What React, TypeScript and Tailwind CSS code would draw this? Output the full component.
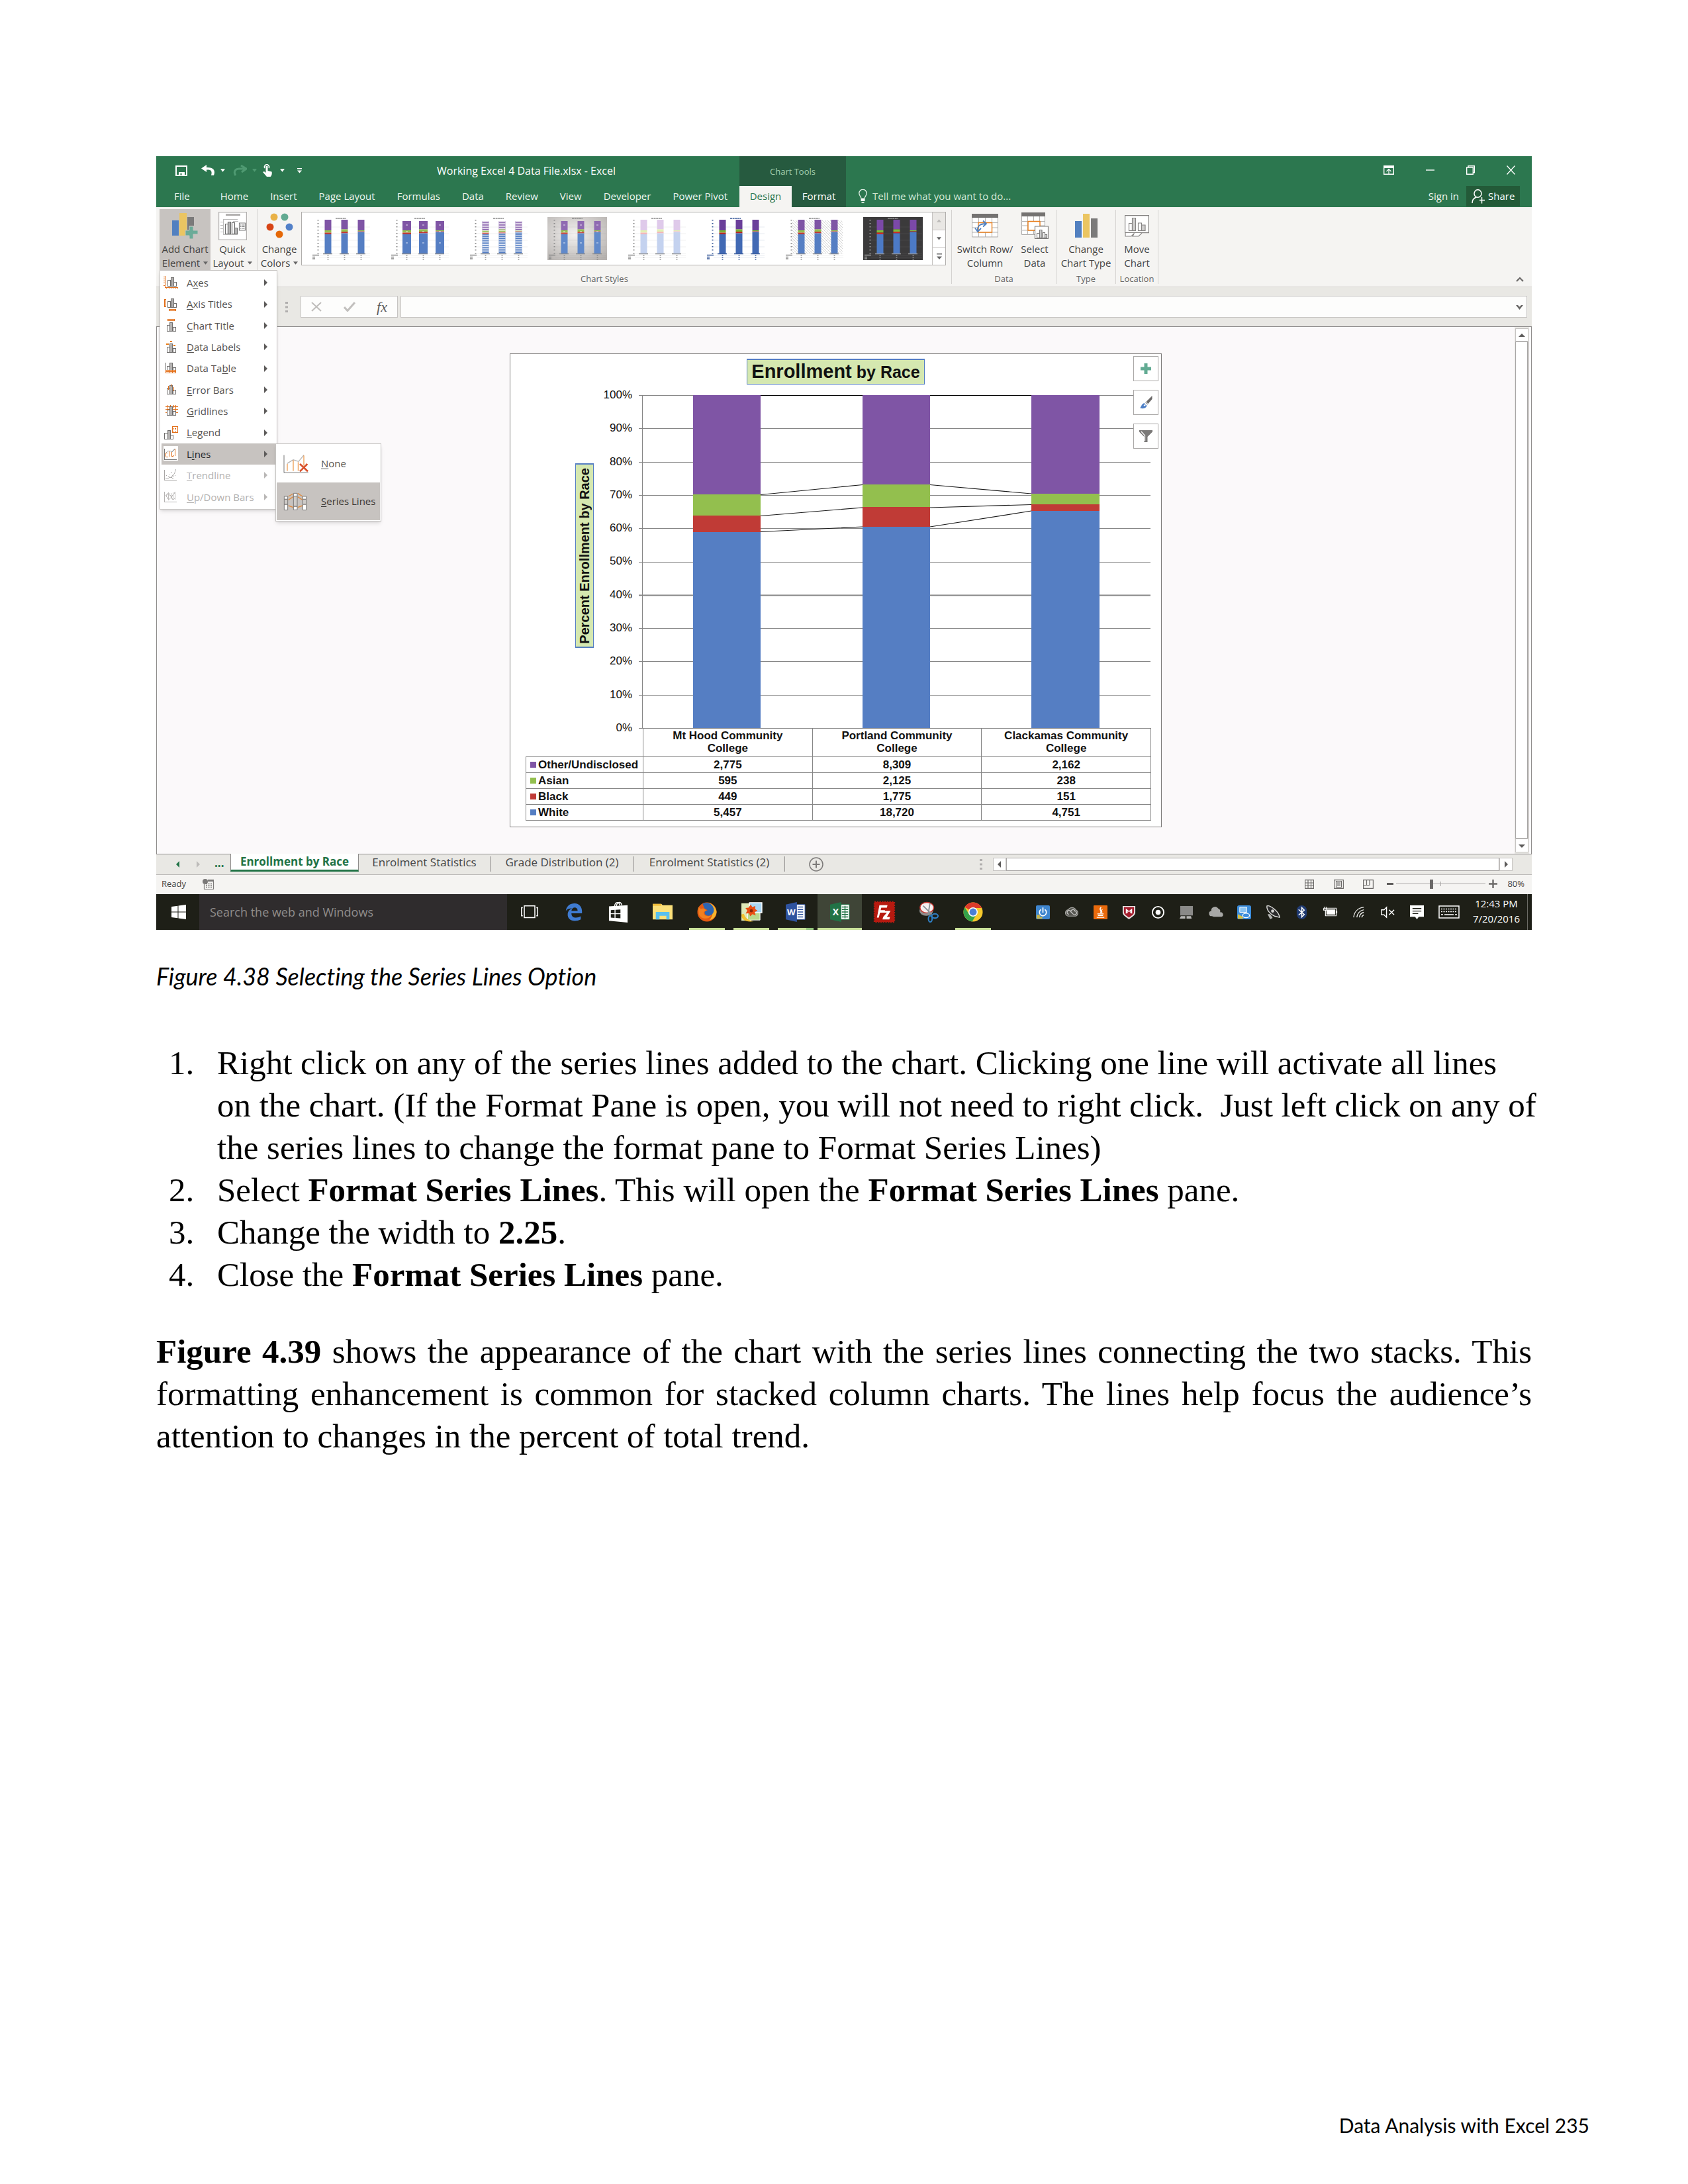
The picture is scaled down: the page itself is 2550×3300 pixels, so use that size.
import React from "react";

/* ---------- small shared drawings ---------- */

function Caret({ className = "" }: { className?: string }) {
  return (
    <svg viewBox="0 0 8 5" className={"inline-block h-[5px] w-[7px] " + className} aria-hidden="true">
      <path d="M0 0h8L4 5z" fill="currentColor" />
    </svg>
  );
}

function Grip() {
  return (
    <svg viewBox="0 0 4 16" className="h-[16px] w-[4px]" aria-hidden="true">
      <path d="M0 0h4v3H0zM0 6.500h4v3H0zM0 13h4v3H0z" fill="#b1afae" />
    </svg>
  );
}

function Arrow({ dir, color = "#5d5b5a" }: { dir: "up" | "down" | "left" | "right"; color?: string }) {
  const d = {
    up: "M0 8h10L5 3z",
    down: "M0 3h10L5 8z",
    left: "M7 0v10L2 5z",
    right: "M3 0v10l5-5z",
  }[dir];
  return (
    <svg viewBox="0 0 10 10" className="h-[10px] w-[10px]" aria-hidden="true">
      <path d={d} fill={color} />
    </svg>
  );
}

/* ---------- title bar and tabs ---------- */

function TitleBar() {
  return (
    <div className="flex h-[45px] items-stretch text-white">
      <div className="flex w-[424px] items-center pb-[2px] pl-[29px]">
        <button aria-label="Save">
          <svg viewBox="0 0 18 16" className="h-[16px] w-[18px]">
            <path d="M1 1h16v14H1z" fill="none" stroke="#fff" strokeWidth="2" />
            <path d="M5 10h9v6h-9z" fill="#fff" />
            <path d="M7.5 12h2v3h-2z" fill="#2c774f" />
          </svg>
        </button>
        <button aria-label="Undo" className="ml-[21px] flex items-center gap-[8px]">
          <svg viewBox="0 0 21 17" className="h-[17px] w-[21px]">
            <path d="M8 0L0 5.5 8 11V7.5c6-.5 9 1 7 8.500h4c3-8-1-12.500-11-12z" fill="#fff" />
          </svg>
          <Caret />
        </button>
        <button aria-label="Redo" className="ml-[12px] flex items-center gap-[8px] text-[#4f9a72]">
          <svg viewBox="0 0 21 17" className="h-[17px] w-[21px]">
            <path d="M12 1l8 5-7 5M19 6H9c-7 0-8 6-5 10" fill="none" stroke="#4f9a72" strokeWidth="3" />
          </svg>
          <Caret />
        </button>
        <button aria-label="Touch mode" className="ml-[8px] flex items-center gap-[11px]">
          <svg viewBox="0 0 16 19" className="h-[19px] w-[16px]">
            <path d="M4 6a3.500 3.500 0 1 1 6 0" fill="none" stroke="#fff" strokeWidth="1.600" />
            <path d="M5.500 3h3v7l6 1.500c1 4-1 7-2 7.500H7L1 12l2-1 2.500 2z" fill="#fff" />
          </svg>
          <Caret />
        </button>
        <button aria-label="Customize toolbar" className="ml-[19px]">
          <svg viewBox="0 0 7 8" className="h-[8px] w-[7px]">
            <path d="M0 0h7v1.500H0zM0 3.500h7L3.500 7.500z" fill="#fff" />
          </svg>
        </button>
      </div>
      <div className="flex w-[457px] items-center pb-[2px] whitespace-nowrap text-[16px]">
        Working Excel 4 Data File.xlsx - Excel
      </div>
      <div className="flex w-[161px] items-center justify-center bg-[#265a3f] text-[13px] text-[#a3d0b1]">
        <span className="pt-[3px]">Chart Tools</span>
      </div>
      <div className="ml-auto flex items-center gap-[48px] pr-[25px] pb-[3px]">
        <button aria-label="Ribbon display options">
          <svg viewBox="0 0 16 14" className="h-[14px] w-[16px]">
            <path d="M.700.700h14.600v12.600H.700z" fill="none" stroke="#fff" strokeWidth="1.400" />
            <path d="M1 1h14v3H1z" fill="#fff" />
            <path d="M8 13V6M4.500 9L8 5.500 11.500 9" fill="none" stroke="#fff" strokeWidth="1.200" />
          </svg>
        </button>
        <button aria-label="Minimize">
          <svg viewBox="0 0 13 14" className="h-[14px] w-[13px]">
            <path d="M0 7h13" stroke="#fff" strokeWidth="1.400" />
          </svg>
        </button>
        <button aria-label="Restore">
          <svg viewBox="0 0 13 14" className="h-[14px] w-[13px]">
            <path d="M.700 3h9.600v10.300H.700zM3 3V.700h9.300v10H10" fill="none" stroke="#fff" strokeWidth="1.400" />
          </svg>
        </button>
        <button aria-label="Close">
          <svg viewBox="0 0 13 14" className="h-[14px] w-[13px]">
            <path d="M.500.500l12 13M12.500.500l-12 13" stroke="#fff" strokeWidth="1.400" />
          </svg>
        </button>
      </div>
    </div>
  );
}

const TABS = ["Home", "Insert", "Page Layout", "Formulas", "Data", "Review", "View", "Developer", "Power Pivot"];

function TabRow() {
  return (
    <div className="flex h-[32px] items-stretch whitespace-nowrap text-[15px] text-[#eef6f0]">
      <div className="flex w-[881px] items-center pb-[2px] pl-[27px]">
        <button className="mr-[46px]">File</button>
        <div className="flex gap-[33px]">
          {TABS.map((t) => (
            <button key={t}>{t}</button>
          ))}
        </div>
      </div>
      <button className="w-[79px] bg-[#f5f4f2] pb-[2px] text-[#2c774f]">Design</button>
      <button className="w-[82px] bg-[#265a3f] pb-[2px] text-white">Format</button>
      <label className="ml-[19px] flex items-center gap-[8px] pb-[2px]">
        <svg viewBox="0 0 13 21" className="h-[21px] w-[13px]" aria-hidden="true">
          <path d="M4 14c0-3-3.200-4-3.200-8A5.700 5.700 0 0 1 12.200 6c0 4-3.200 5-3.200 8z" fill="none" stroke="#e4f1e8" strokeWidth="1.300" />
          <path d="M3.500 15h6v3h-6zM4.500 19h4v1.600h-4z" fill="#fff" />
        </svg>
        <input
          aria-label="Tell me what you want to do"
          placeholder="Tell me what you want to do..."
          className="w-[260px] bg-transparent outline-none placeholder:text-[#d5e9d6] placeholder:opacity-100"
        />
      </label>
      <div className="ml-auto flex items-stretch pr-[18px]">
        <button className="mr-[11px] pb-[2px]">Sign in</button>
        <button className="mb-px flex w-[81px] items-center gap-[5px] bg-[#235a38] pl-[8px] text-white">
          <svg viewBox="0 0 20 22" className="h-[22px] w-[20px]" aria-hidden="true">
            <ellipse cx="9.500" cy="6.500" rx="5.500" ry="5.800" fill="none" stroke="#fff" strokeWidth="1.500" />
            <path d="M1 21c0-5 3-8 6.500-9M12 16.500h8M15.500 12v9.500" fill="none" stroke="#fff" strokeWidth="1.500" />
          </svg>
          Share
        </button>
      </div>
    </div>
  );
}

/* ---------- ribbon ---------- */

function BigButton({
  icon,
  lines,
  caret = false,
  className,
}: {
  icon: React.ReactNode;
  lines: [string, string];
  caret?: boolean;
  className: string;
}) {
  return (
    <button className={"flex flex-col items-center whitespace-nowrap text-[15px] leading-[21px] text-[#444] " + className}>
      <span className="flex h-[50px] items-center justify-center">{icon}</span>
      <span>{lines[0]}</span>
      <span className="flex items-center gap-[5px]">
        {lines[1]}
        {caret && <Caret className="text-[#666]" />}
      </span>
    </button>
  );
}

function Group({ label, className = "", children }: { label: string; className?: string; children: React.ReactNode }) {
  return (
    <div className={"mt-[4px] flex h-[112px] flex-col border-r border-[#d4d2d0] " + className}>
      <div className="-mt-px flex h-[96px] items-start">{children}</div>
      <div className="text-center text-[13px] leading-[26px] text-[#666]">{label}</div>
    </div>
  );
}

type Thumb = {
  bg?: string;
  wide?: boolean;
  purple: string;
  green: string;
  red: string;
  blue: string;
  striped?: boolean;
  hatch?: boolean;
  ink?: string;
  marks?: boolean;
};

const THUMBS: Thumb[] = [
  { purple: "#7f55a5", green: "#93bf4e", red: "#c03b36", blue: "#557ec3" },
  { purple: "#7f55a5", green: "#93bf4e", red: "#c03b36", blue: "#557ec3", wide: true, marks: true },
  { purple: "#8a63ad", green: "#93bf4e", red: "#c03b36", blue: "#557ec3", striped: true },
  { bg: "url(#shade)", purple: "#8f6ab2", green: "#93bf4e", red: "#c8504b", blue: "#6089ca", marks: true },
  { purple: "#dfcaea", green: "#e2efb4", red: "#f3b6ba", blue: "#c4d2ef" },
  { purple: "#6a3f9a", green: "#78b032", red: "#b72a24", blue: "#4169b4", ink: "#385a99" },
  { purple: "#7f55a5", green: "#93bf4e", red: "#c03b36", blue: "#557ec3", hatch: true },
  { bg: "#3b3a3b", purple: "#7b49a8", green: "#7fbd3a", red: "#cc2c26", blue: "#4c7ac6", ink: "#9a9a9a" },
];

function ThumbChart({ t }: { t: Thumb }) {
  const w = t.wide ? 13 : 10;
  const top = t.wide || t.marks || t.striped ? 6 : 4;
  const ink = t.ink ?? "#8b8b8b";
  const bars = [
    { x: 25.5, g: 20, r: 23.5, b: 26 },
    { x: 50.5, g: 18.5, r: 22, b: 24.5 },
    { x: 75.5, g: 20, r: 21.5, b: 22.5 },
  ];
  return (
    <svg viewBox="0 0 90 65" className="h-[65px] w-[90px]" aria-hidden="true">
      <defs>
        <radialGradient id="shade" cx=".45" cy=".4" r=".75">
          <stop offset="0" stopColor="#f3f1f0" />
          <stop offset="1" stopColor="#b5b1ae" />
        </radialGradient>
        <pattern id="hatch" width="4" height="4" patternUnits="userSpaceOnUse">
          <path d="M0 0l4 4" stroke="#cfcfcf" strokeWidth=".9" />
        </pattern>
      </defs>
      <rect width="90" height="65" fill={t.bg ?? "#fff"} />
      {t.hatch && <rect x="12" y="5" width="76" height="50" fill="url(#hatch)" />}
      <path d="M12 55h77M12 58h77M12 61h77M12 45h77M12 35h77M12 25h77M12 15h77" stroke={ink} strokeWidth=".3" opacity=".4" />
      <path d="M37 2h16" stroke={ink} strokeWidth="1.400" strokeDasharray="3 .6" />
      <path d="M10.500 4v52" stroke={ink} strokeWidth="2" strokeDasharray="1.400 3.600" />
      <path d="M18 55.500h14M43 55.500h14M68 55.500h14" stroke={ink} strokeWidth="1.500" />
      <path d="M2 57.500h10M2 60.500h4M2 63h4" stroke={ink} strokeWidth="1.400" />
      <path d="M25.500 57v8M50.500 57v8M75.500 57v8" stroke={ink} strokeWidth="1.800" strokeDasharray="1.500 1.500" />
      {bars.map((b) => (
        <g key={b.x}>
          <rect x={b.x - w / 2} y={top} width={w} height={b.g - top} fill={t.purple} />
          <rect x={b.x - w / 2} y={b.g} width={w} height={b.r - b.g} fill={t.green} />
          <rect x={b.x - w / 2} y={b.r} width={w} height={b.b - b.r} fill={t.red} />
          <rect x={b.x - w / 2} y={b.b} width={w} height={55 - b.b} fill={t.blue} />
          {t.striped && (
            <path d={`M${b.x} 6v49`} stroke="#fff" strokeWidth={w} strokeDasharray="1.200 1.500" opacity=".85" />
          )}
          {t.marks && <path d={`M${b.x - 1.5} 12h3M${b.x - 1.5} 39h3M${b.x - 1.5} 22h3`} stroke="#fff" strokeWidth=".8" />}
        </g>
      ))}
    </svg>
  );
}

function Gallery() {
  return (
    <div className="mt-[4px] flex h-[81px] w-[974px] border border-[#b0aeac] bg-white">
      <div className="flex flex-1 items-center justify-between px-[14px]">
        {THUMBS.map((t, i) => (
          <button key={i} aria-label={"Chart style " + (i + 1)}>
            <ThumbChart t={t} />
          </button>
        ))}
      </div>
      <div className="flex w-[20px] flex-col border-l border-[#c6c4c2]">
        <button aria-label="Scroll styles up" className="flex flex-1 items-center justify-center bg-[#e9e7e4]">
          <Caret className="rotate-180 text-[#bdbbb9]" />
        </button>
        <button aria-label="Scroll styles down" className="flex flex-1 items-center justify-center border-y border-[#c6c4c2]">
          <Caret className="text-[#666]" />
        </button>
        <button aria-label="More styles" className="flex flex-1 items-center justify-center">
          <svg viewBox="0 0 8 9" className="h-[9px] w-[8px]">
            <path d="M0 0h8v1.500H0zM0 4.500h8L4 9z" fill="#666" />
          </svg>
        </button>
      </div>
    </div>
  );
}

const AddChartIcon = (
  <svg viewBox="0 0 39 40" className="h-[40px] w-[39px]" aria-hidden="true">
    <path d="M0 12h10v23H0z" fill="#5280c0" />
    <path d="M11 1h11v34H11z" fill="#ebc562" />
    <path d="M23 7h10v13h-7v7h-3z" fill="#7b7a7a" />
    <path d="M20 27h6v-6h6v6h7v6h-7v7h-6v-5h-6z" fill="#6bab98" stroke="#c7c3c0" strokeWidth="1" />
  </svg>
);

const QuickLayoutIcon = (
  <svg viewBox="0 0 43 43" className="h-[43px] w-[43px]" aria-hidden="true">
    <path d="M.600.600h41.800v41.800H.600z" fill="#fff" stroke="#b4b2b1" strokeWidth="1.200" />
    <path d="M11 3h22v3H11z" fill="#b4b2b1" />
    <path d="M7 11.500h22M7 34.500h22M3 15.500h5M3 20.500h5M3 25.500h5M3 30.500h5M7.500 11v24M22 14.500h8" stroke="#bbb" strokeWidth="1" />
    <path d="M10.500 18.500h4v15h-4zM20.500 16.500h4v17h-4z" fill="#fff" stroke="#6a6a6a" strokeWidth="1.200" />
    <path d="M14.500 15.500h4v18h-4zM24.500 24.500h4v9h-4z" fill="#b9b9b9" stroke="#6a6a6a" strokeWidth="1.200" />
    <path d="M31.500 17h9v11h-9z" fill="#fff" stroke="#7a7a7a" strokeWidth="1.200" />
    <path d="M33 20h1.500M33 22.500h1.500M33 25h1.500M35.500 20h4M35.500 22.500h4M35.500 25h4" stroke="#777" strokeWidth="1.100" />
  </svg>
);

const ColorsIcon = (
  <svg viewBox="0 0 41 38" className="h-[38px] w-[41px]" aria-hidden="true">
    <circle cx="12" cy="6" r="5.500" fill="#e9b146" />
    <circle cx="28" cy="6" r="5.500" fill="#62aa92" />
    <circle cx="6" cy="21" r="5.500" fill="#d74415" />
    <circle cx="35" cy="21" r="5.500" fill="#5280c8" />
    <circle cx="20" cy="32" r="5.500" fill="#e56806" />
  </svg>
);

const SwitchIcon = (
  <svg viewBox="0 0 40 36" className="h-[36px] w-[40px]" aria-hidden="true">
    <path d="M.500.500h39v34.500H.500z" fill="#fff" stroke="#a9a7a6" />
    <path d="M0 0h40v6H0z" fill="#747271" />
    <path d="M10.500 6v29M20.500 6v29M30.500 6v29M0 13.500h40M0 21h40M0 28h40" stroke="#b4b2b0" strokeWidth="1.100" />
    <path d="M10 13.500h20.500V28H10z" fill="#fff" stroke="#e97e1b" strokeWidth="1.400" />
    <path d="M9 26c-1-7 3-11 12-11M17 10.500l5 4.500-5 4.500M5 21.500L9 27l5-5" fill="none" stroke="#4f80c0" strokeWidth="1.800" />
  </svg>
);

const SelectDataIcon = (
  <svg viewBox="0 0 41 40" className="h-[40px] w-[41px]" aria-hidden="true">
    <path d="M.500.500h35v33H.500z" fill="#fff" stroke="#a9a7a6" />
    <path d="M0 0h36v6H0z" fill="#747271" />
    <path d="M9.500 6v28M18.500 6v28M27.500 6v28M0 13.500h36M0 20h36M0 27h36" stroke="#b4b2b0" strokeWidth="1.100" />
    <path d="M10 13.500h18V27H10z" fill="#fff" stroke="#e97e1b" strokeWidth="1.400" />
    <path d="M20.500 21h20v18.500h-20z" fill="#fff" stroke="#7a7877" strokeWidth="1.200" />
    <path d="M23.500 31.500h4v7h-4zM32.500 30.500h3v8h-3z" fill="#fff" stroke="#7a7877" strokeWidth="1.100" />
    <path d="M27.500 26.500h3.500v12h-3.500zM35.500 33.500h3v5h-3z" fill="#ccc" stroke="#7a7877" strokeWidth="1.100" />
  </svg>
);

const ChartTypeIcon = (
  <svg viewBox="0 0 34 36" className="h-[36px] w-[34px]" aria-hidden="true">
    <path d="M0 11h10v25H0z" fill="#5280c0" />
    <path d="M12 0h10v36H12z" fill="#ebc562" />
    <path d="M24 7h10v29H24z" fill="#7b7a7a" />
  </svg>
);

const MoveChartIcon = (
  <svg viewBox="0 0 37 33" className="h-[33px] w-[37px]" aria-hidden="true">
    <path d="M.600.600h35.800v26H.600z" fill="#fff" stroke="#868483" strokeWidth="1.200" />
    <path d="M6.500 12.500h5v11h-5zM20.500 12h5v11.500h-5z" fill="#fff" stroke="#868483" strokeWidth="1.200" />
    <path d="M11.500 4.500h5v19h-5zM25.500 15h5.500v8.500h-5.500z" fill="#d0cfce" stroke="#868483" strokeWidth="1.200" />
    <path d="M1 27v5h9l4.500-4.500L12 32h9l5-5" fill="#fff" stroke="#868483" strokeWidth="1.200" />
  </svg>
);

/* ---------- Add Chart Element menu ---------- */

function Columns({ x, y }: { x: number; y: number }) {
  return (
    <g stroke="#6f6d6c" strokeWidth="3">
      <path d={`M${x} ${y + 13}h13v26h-13z`} fill="#fff" />
      <path d={`M${x + 27} ${y + 21}h12v18h-12z`} fill="#fff" />
      <path d={`M${x + 14} ${y}h12v39h-12z`} fill="#b3b1b0" />
    </g>
  );
}

const O = { fill: "none", stroke: "#e2701b", strokeWidth: 3 };
const MENU_ICONS: Record<string, React.ReactNode> = {
  axes: (
    <>
      <Columns x={19} y={6} />
      <path d="M7 1v50h59M0 3h7M0 12h7M0 22h7M0 32h7M0 42h7M14 51v6M24 51v6M34 51v6M44 51v6M54 51v6M64 51v6" {...O} />
    </>
  ),
  axisTitles: (
    <>
      <Columns x={19} y={4} />
      <path d="M5 7h6v32H5zM24 52h30v6H24z" {...O} />
    </>
  ),
  chartTitle: (
    <>
      <path d="M18 2h32v6H18z" {...O} />
      <Columns x={15} y={15} />
    </>
  ),
  dataLabels: (
    <>
      <Columns x={15} y={17} />
      <path d="M13 15h11v6H13zM31 2h9v6h-9zM45 20h9v6h-9z" fill="#e97e1b" />
    </>
  ),
  dataTable: (
    <>
      <Columns x={15} y={5} />
      <path d="M9 4v34" stroke="#6f6d6c" strokeWidth="3" />
      <path d="M9 36h45v14H9zM9 43h45M24 36v14M39 36v14" {...O} fill="#fff" />
    </>
  ),
  errorBars: (
    <>
      <Columns x={15} y={10} />
      <path d="M22 12v18M35 2v16M47 18v18" {...O} />
    </>
  ),
  gridlines: (
    <>
      <path d="M8 11h58M8 22h58M8 36h58M17 2v44M31 2v12M45 2v12M56 2v44" {...O} />
      <Columns x={15} y={11} />
    </>
  ),
  legend: (
    <>
      <Columns x={5} y={18} />
      <path d="M39 2h24v26H39zM44 9h4M44 15h4M44 21h4M51 9h7M51 15h7M51 21h7" {...O} fill="#fff" />
    </>
  ),
  lines: (
    <>
      <path d="M0-6h66v66H0z" fill="#fff" />
      <path d="M5 5v49h55" fill="none" stroke="#777" strokeWidth="3" />
      <path d="M11 25l10-9 9 1 8 4 14-15" fill="none" stroke="#aaa" strokeWidth="3" />
      <path d="M11 42V26l6-2M25 42V18M38 42V22M53 38V6M11 42h10M38 42l10-4" {...O} />
    </>
  ),
  trendline: (
    <>
      <path d="M5 5v47h55" fill="none" stroke="#a8a6a5" strokeWidth="3" />
      <path d="M10 44c24 0 40-14 46-40" fill="none" stroke="#b5b3b2" strokeWidth="3" />
      <path d="M12 32h4M22 34h4M24 24h4M34 20h4M40 46h4M44 36h4M50 30h4M34 40h4" stroke="#a8a6a5" strokeWidth="3" />
    </>
  ),
  upDown: (
    <>
      <path d="M5 5v47h55" fill="none" stroke="#b5b3b2" strokeWidth="3" />
      <path d="M11 24l12-12 20 30 10-6V8L34 32 23 42zM23 12v30M53 8v34M34 12v28M43 10v32" fill="none" stroke="#c0bebd" strokeWidth="3" />
    </>
  ),
};

const MENU = [
  { icon: "axes", pre: "A", key: "x", post: "es" },
  { icon: "axisTitles", pre: "", key: "A", post: "xis Titles" },
  { icon: "chartTitle", pre: "", key: "C", post: "hart Title" },
  { icon: "dataLabels", pre: "", key: "D", post: "ata Labels" },
  { icon: "dataTable", pre: "Data Ta", key: "b", post: "le" },
  { icon: "errorBars", pre: "", key: "E", post: "rror Bars" },
  { icon: "gridlines", pre: "", key: "G", post: "ridlines" },
  { icon: "legend", pre: "", key: "L", post: "egend" },
  { icon: "lines", pre: "L", key: "i", post: "nes", active: true },
  { icon: "trendline", pre: "", key: "T", post: "rendline", disabled: true },
  { icon: "upDown", pre: "", key: "U", post: "p/Down Bars", disabled: true },
];

function ChartElementMenu() {
  return (
    <div className="absolute top-[92px] left-0 z-10">
      <ul className="grid h-[362px] w-[178px] auto-rows-fr border border-[#c6c4c2] bg-white p-[2px] text-[15px] text-[#55524f] shadow-md">
        {MENU.map((m) => (
          <li key={m.icon} className="flex">
            <button
              disabled={m.disabled}
              className={
                "flex flex-1 items-center pl-[3px] whitespace-nowrap " +
                (m.active ? "bg-[#c7c3c0] text-[#262626]" : m.disabled ? "text-[#b3b1b0]" : "")
              }
            >
              <svg
                viewBox="0 0 66 60"
                shapeRendering="crispEdges"
                className="mr-[13px] h-[20px] w-[22px] shrink-0 overflow-visible"
                aria-hidden="true"
              >
                {MENU_ICONS[m.icon]}
              </svg>
              <span>
                {m.pre}
                <u className="underline-offset-2">{m.key}</u>
                {m.post}
              </span>
              <span className="mr-[12px] ml-auto">
                <svg viewBox="0 0 5 10" className="h-[10px] w-[5px]" aria-hidden="true">
                  <path d="M0 0v10l5-5z" fill={m.disabled ? "#b9b7b6" : "#5d5b5a"} />
                </svg>
              </span>
            </button>
          </li>
        ))}
      </ul>
      <ul className="absolute top-[262px] left-[175px] flex h-[118px] w-[160px] flex-col border border-[#c6c4c2] bg-white p-px text-[15px] text-[#55524f] shadow-md">
        <li className="flex flex-1">
          <button className="flex flex-1 items-center gap-[19px] pl-[10px]">
            <svg viewBox="0 0 112 84" className="h-[28px] w-[38px]" aria-hidden="true">
              <path d="M2 2v80h110" fill="none" stroke="#777" strokeWidth="3" />
              <path d="M16 40l28-17 24 8L92 2" fill="none" stroke="#b5b3b2" strokeWidth="4" />
              <path d="M17 74V42M44 74V25M66 74V34M92 50V4" fill="none" stroke="#e97e1b" strokeWidth="3" />
              <path d="M74 42l36 34M108 42L74 76" stroke="#d9502a" strokeWidth="8" />
            </svg>
            <span>
              <u className="underline-offset-2">N</u>one
            </span>
          </button>
        </li>
        <li className="flex flex-1">
          <button className="flex flex-1 items-center gap-[19px] bg-[#c7c3c0] pl-[10px] whitespace-nowrap text-[#3a3836]">
            <svg viewBox="0 0 112 84" className="h-[28px] w-[38px] shrink-0" aria-hidden="true">
              <path d="M22 18L44 6M22 34l22-14M22 60l22 8M64 4l22 14M64 20l22 14M64 68l22-8" stroke="#e08a3c" strokeWidth="4" />
              <g stroke="#7a7877" strokeWidth="3">
                <path d="M3 18h16v13H3zM3 54h16v26H3zM45 4h17v13H45zM45 63h17v16H45zM87 18h16v13H87zM87 54h16v26H87z" fill="#fff" />
                <path d="M3 31h16v23H3zM45 17h17v46H45zM87 31h16v23H87z" fill="#cfccc9" />
              </g>
            </svg>
            <span>
              <u className="underline-offset-2">S</u>eries Lines
            </span>
          </button>
        </li>
      </ul>
    </div>
  );
}

function Ribbon() {
  return (
    <div className="relative flex h-[121px] border-b border-[#d4d2d0] bg-[#f5f4f2] pl-[5px]">
      <div className="relative mt-[3px] flex h-[96px] w-[148px] border-r border-[#d4d2d0]">
        <BigButton className="w-[77px] bg-[#c7c3c0]" icon={AddChartIcon} lines={["Add Chart", "Element"]} caret />
        <BigButton className="w-[66px]" icon={QuickLayoutIcon} lines={["Quick", "Layout"]} caret />
        <ChartElementMenu />
      </div>
      <Group label="Chart Styles" className="w-[1049px]">
        <BigButton className="w-[66px]" icon={ColorsIcon} lines={["Change", "Colors"]} caret />
        <Gallery />
      </Group>
      <Group label="Data" className="w-[158px]">
        <BigButton className="w-[100px]" icon={SwitchIcon} lines={["Switch Row/", "Column"]} />
        <BigButton className="w-[50px]" icon={SelectDataIcon} lines={["Select", "Data"]} />
      </Group>
      <Group label="Type" className="w-[90px]">
        <BigButton className="w-[89px]" icon={ChartTypeIcon} lines={["Change", "Chart Type"]} />
      </Group>
      <Group label="Location" className="w-[64px]">
        <BigButton className="w-[63px]" icon={MoveChartIcon} lines={["Move", "Chart"]} />
      </Group>
      <button aria-label="Collapse ribbon" className="mt-auto mr-[12px] mb-[7px] ml-auto">
        <svg viewBox="0 0 12 8" className="h-[8px] w-[12px]">
          <path d="M1 7l5-5 5 5" fill="none" stroke="#6b6968" strokeWidth="2.200" />
        </svg>
      </button>
    </div>
  );
}

function FormulaBar() {
  return (
    <div className="flex h-[60px] items-center border-b border-[#8f8d8c] bg-[#e9e8e4] pr-[7px] pl-[195px]">
      <Grip />
      <div className="ml-[19px] flex h-[33px] w-[147px] items-center justify-between border border-[#c6c4c2] bg-[#fdfdfc] px-[15px]">
        <button aria-label="Cancel">
          <svg viewBox="0 0 16 15" className="h-[15px] w-[16px]">
            <path d="M1 1l14 13M15 1L1 14" stroke="#bfbdbb" strokeWidth="2" />
          </svg>
        </button>
        <button aria-label="Enter">
          <svg viewBox="0 0 18 15" className="h-[15px] w-[18px]">
            <path d="M1 8l5 5.500L17 1" fill="none" stroke="#c2c0be" strokeWidth="3" />
          </svg>
        </button>
        <button aria-label="Insert function" className="font-['Liberation_Serif',serif] text-[22px] leading-none text-[#5f5d5c] italic">
          fx
        </button>
      </div>
      <div className="ml-[4px] flex h-[33px] flex-1 items-center border border-[#c6c4c2] bg-[#fdfdfc] pr-[5px]">
        <input aria-label="Formula" className="min-w-0 flex-1 bg-transparent outline-none" />
        <svg viewBox="0 0 11 8" className="h-[8px] w-[11px]" aria-hidden="true">
          <path d="M0 1h3l2.500 2.500L8 1h3L5.500 8z" fill="#6b6968" />
        </svg>
      </div>
    </div>
  );
}

/* ---------- chart ---------- */

const SERIES = [
  { name: "Other/Undisclosed", color: "bg-[#7f55a5]", values: ["2,775", "8,309", "2,162"] },
  { name: "Asian", color: "bg-[#93bf4e]", values: ["595", "2,125", "238"] },
  { name: "Black", color: "bg-[#c03b36]", values: ["449", "1,775", "151"] },
  { name: "White", color: "bg-[#557ec3]", values: ["5,457", "18,720", "4,751"] },
];
const COLLEGES = ["Mt Hood Community College", "Portland Community College", "Clackamas Community College"];
const STACKS = [
  { x: 82, w: 102, asian: 150, black: 182, white: 207 },
  { x: 338, w: 102, asian: 135, black: 169, white: 199 },
  { x: 593, w: 103, asian: 149, black: 165, white: 175 },
];
const PERCENTS = ["100%", "90%", "80%", "70%", "60%", "50%", "40%", "30%", "20%", "10%", "0%"];

function Plot() {
  return (
    <svg viewBox="0 0 773 504" className="mt-[9px] h-[504px] w-[773px]" role="img" aria-label="Stacked columns of percent enrollment by race">
      {PERCENTS.map((p, i) => (
        <path key={p} d={`M0 ${Math.round(i * 50.3) + 0.5}h773`} stroke="#868686" strokeWidth={i === 6 ? 2 : 1} />
      ))}
      <path d="M5.500 0v504" stroke="#868686" />
      <path d="M184 .5h154M440 .5h153" stroke="#000" />
      {STACKS.map((s) => (
        <g key={s.x}>
          <rect x={s.x} y="0" width={s.w} height={s.asian} fill="#7f55a5" />
          <rect x={s.x} y={s.asian} width={s.w} height={s.black - s.asian} fill="#93bf4e" />
          <rect x={s.x} y={s.black} width={s.w} height={s.white - s.black} fill="#c03b36" />
          <rect x={s.x} y={s.white} width={s.w} height={503 - s.white} fill="#557ec3" />
        </g>
      ))}
      <path
        d="M184 150.500L338 135.500M184 182.500L338 170M184 206.500L338 199M440 135.500L593 149M440 170L593 165.500M440 199L593 175"
        fill="none"
        stroke="#1a1a1a"
        strokeWidth="1.200"
      />
    </svg>
  );
}

function DataTable() {
  return (
    <table className="ml-[23px] w-[945px] table-fixed border-collapse text-center text-[17px] leading-[19px] font-bold">
      <colgroup>
        <col className="w-[177px]" />
        <col />
        <col />
        <col />
      </colgroup>
      <thead>
        <tr className="h-[43px]">
          <td />
          {COLLEGES.map((c) => (
            <th key={c} scope="col" className="border border-t-0 border-[#868686] px-[28px]">
              {c}
            </th>
          ))}
        </tr>
      </thead>
      <tbody>
        {SERIES.map((s) => (
          <tr key={s.name} className="h-[24px]">
            <th scope="row" className="border border-[#868686] text-left">
              <span className="flex items-center gap-[3px] pl-[6px]">
                <span className={"h-[9px] w-[9px] shrink-0 " + s.color} />
                {s.name}
              </span>
            </th>
            {s.values.map((v) => (
              <td key={v} className="border border-[#868686]">
                {v}
              </td>
            ))}
          </tr>
        ))}
      </tbody>
    </table>
  );
}

function ChartCard() {
  return (
    <figure className="relative h-[716px] w-[985px] border border-[#7f7d7c] bg-white font-['Liberation_Sans',sans-serif] text-[#111]">
      <div className="flex h-[53px] items-start justify-center pt-[7px]">
        <h2 className="flex h-[39px] items-baseline gap-[7px] border border-t-2 border-[#557ec3] bg-[#d5e8b0] px-[6px] text-[29px] leading-[34px] font-bold">
          Enrollment <span className="text-[25px]">by Race</span>
        </h2>
      </div>
      <div className="flex h-[512px] items-start">
        <div className="mt-[112px] ml-[98px] flex h-[279px] w-[28px] items-center justify-center border border-y-2 border-[#557ec3] bg-[#d5e8b0]">
          <span className="rotate-180 text-[20px] leading-[26px] font-bold whitespace-nowrap [writing-mode:vertical-rl]">
            Percent Enrollment by Race
          </span>
        </div>
        <ul className="flex h-[521px] w-[58px] flex-col justify-between text-right text-[17px] leading-[18px]">
          {PERCENTS.map((p) => (
            <li key={p}>{p}</li>
          ))}
        </ul>
        <div className="ml-[10px]">
          <Plot />
        </div>
      </div>
      <DataTable />
      <div className="absolute top-[3px] right-[4px] flex flex-col gap-[13px]">
        <button aria-label="Chart elements" className="flex h-[38px] w-[38px] items-center justify-center border border-[#a9a7a6] bg-white">
          <svg viewBox="0 0 16 16" className="h-[16px] w-[16px]">
            <path d="M5.500 0h5v5.500H16v5h-5.500V16h-5v-5.500H0v-5h5.500z" fill="#62ab93" />
          </svg>
        </button>
        <button aria-label="Chart styles" className="flex h-[38px] w-[38px] items-center justify-center border border-[#a9a7a6] bg-white">
          <svg viewBox="0 0 20 20" className="h-[20px] w-[20px]">
            <path d="M19.500 0v5l-6 7-3-3z" fill="#6b6968" />
            <path d="M9.500 10l3.500 3" stroke="#9a9a9a" strokeWidth="1.500" />
            <path d="M1 18.500c2-1 2-6 6.500-7.500l4 4c-1 4-6 5-10.500 3.500z" fill="#4f80c6" />
            <path d="M7 15l2.500-1.500" stroke="#fff" strokeWidth="1.500" />
          </svg>
        </button>
        <button aria-label="Chart filters" className="flex h-[38px] w-[38px] items-center justify-center border border-[#a9a7a6] bg-white">
          <svg viewBox="0 0 20 18" className="h-[18px] w-[20px]">
            <path d="M0 0h20v2.500L12.500 10v8h-5v-8L0 2.500z" fill="#7b7978" />
            <path d="M3 2l5.500 6v8" fill="none" stroke="#fff" strokeWidth="1.300" />
          </svg>
        </button>
      </div>
    </figure>
  );
}

function Worksheet() {
  return (
    <div className="flex h-[796px] border-x border-[#8f8d8c] bg-[#fbf9fa]">
      <div className="flex flex-1 justify-center pt-[40px]">
        <ChartCard />
      </div>
      <div className="mr-[3px] flex w-[22px] flex-col items-center bg-[#e9e8e4] py-[2px]">
        <button aria-label="Scroll up" className="flex h-[20px] w-[20px] items-center justify-center border border-[#c6c4c2] bg-white">
          <Arrow dir="up" />
        </button>
        <div className="w-[20px] flex-1 border border-r-2 border-[#a9a7a6] bg-white" />
        <button aria-label="Scroll down" className="flex h-[21px] w-[20px] items-center justify-center border border-[#c6c4c2] bg-white">
          <Arrow dir="down" />
        </button>
      </div>
    </div>
  );
}

/* ---------- sheet tabs and status bar ---------- */

function SheetTabs() {
  return (
    <div className="flex h-[32px] border-b border-[#bdbbb9] bg-[#e9e8e4] text-[17px] whitespace-nowrap text-[#444]">
      <div className="flex w-[112px] items-center border-t border-[#8f8d8c] pl-[28px]">
        <button aria-label="Previous sheet">
          <Arrow dir="left" color="#217346" />
        </button>
        <button aria-label="Next sheet" className="ml-[20px]">
          <Arrow dir="right" color="#bdbbb9" />
        </button>
        <button className="ml-[20px] pb-[4px] font-bold text-[#217346]">...</button>
      </div>
      <button className="mb-[4px] w-[194px] border-x border-b-3 border-x-[#8f8d8c] border-b-[#217346] bg-white leading-[24px] font-bold text-[#217346]">
        Enrollment by Race
      </button>
      <div className="flex flex-1 border-t border-[#8f8d8c]">
        <div className="mt-[3px] flex h-[23px]">
          <button className="w-[199px] border-r border-[#8f8d8c] pb-[5px] leading-[18px]">Enrolment Statistics</button>
          <button className="w-[217px] border-r border-[#8f8d8c] pb-[5px] leading-[18px]">Grade Distribution (2)</button>
          <button className="w-[228px] border-r border-[#8f8d8c] pb-[5px] leading-[18px]">Enrolment Statistics (2)</button>
        </div>
        <button aria-label="New sheet" className="ml-[36px]">
          <svg viewBox="0 0 22 22" className="h-[22px] w-[22px]">
            <circle cx="11" cy="11" r="10" fill="none" stroke="#7b7978" strokeWidth="1.500" />
            <path d="M11 5.500v11M5.500 11h11" stroke="#7b7978" strokeWidth="2" />
          </svg>
        </button>
        <div className="ml-auto flex items-center pr-[29px]">
          <Grip />
          <button aria-label="Scroll left" className="ml-[16px] flex h-[20px] w-[20px] items-center justify-center border border-[#c6c4c2] bg-white">
            <Arrow dir="left" />
          </button>
          <div className="h-[20px] w-[745px] border border-[#a9a7a6] bg-white" />
          <button aria-label="Scroll right" className="flex h-[20px] w-[20px] items-center justify-center border border-[#c6c4c2] bg-white">
            <Arrow dir="right" />
          </button>
        </div>
      </div>
    </div>
  );
}

function StatusBar() {
  return (
    <div className="flex h-[29px] items-center bg-[#f5f4f2] pr-[11px] pb-[2px] pl-[8px] text-[13px] text-[#444]">
      <span>Ready</span>
      <svg viewBox="0 0 18 16" className="ml-[25px] h-[16px] w-[18px]" aria-hidden="true">
        <circle cx="4" cy="4" r="4" fill="#7b7978" />
        <path d="M8 1h9v3H8z" fill="#7b7978" />
        <path d="M2.500 8v7.500h14V4" fill="none" stroke="#7b7978" strokeWidth="1.200" />
        <path d="M5 7.500h10M5 10h10M5 12.500h10" stroke="#7b7978" strokeWidth="1.300" strokeDasharray="2 1.500" />
      </svg>
      <div className="ml-auto flex items-center">
        <button aria-label="Normal view">
          <svg viewBox="0 0 14 14" className="h-[14px] w-[14px]">
            <path d="M.600.600h12.800v12.800H.600zM5 0v14M9.500 0v14M0 5h14M0 9.500h14" fill="none" stroke="#6b6968" strokeWidth="1.200" />
          </svg>
        </button>
        <button aria-label="Page layout view" className="ml-[30px]">
          <svg viewBox="0 0 15 14" className="h-[14px] w-[15px]">
            <path d="M.600.600h13.800v12.800H.600zM3.500 2.500h8v9h-8zM5 5h5M5 7h5M5 9h5" fill="none" stroke="#6b6968" strokeWidth="1.100" />
          </svg>
        </button>
        <button aria-label="Page break view" className="ml-[29px]">
          <svg viewBox="0 0 16 14" className="h-[14px] w-[16px]">
            <path d="M.600.600h14.800v12.800H.600zM5.500 0v8.500M10 0v8.500M1 8.500h9" fill="none" stroke="#6b6968" strokeWidth="1.200" />
          </svg>
        </button>
        <button aria-label="Zoom out" className="ml-[20px] h-[3px] w-[10px] bg-[#5d5b5a]" />
        <label className="relative ml-[4px] flex h-[14px] w-[135px] items-center">
          <span className="h-px w-full bg-[#a9a7a6]" />
          <span className="absolute left-[67px] h-[7px] w-px bg-[#a9a7a6]" />
          <input
            type="range"
            aria-label="Zoom"
            min={0}
            max={100}
            defaultValue={39}
            className="absolute inset-0 h-full w-full appearance-none bg-transparent [&::-webkit-slider-thumb]:h-[14px] [&::-webkit-slider-thumb]:w-[5px] [&::-webkit-slider-thumb]:appearance-none [&::-webkit-slider-thumb]:bg-[#6b6968]"
          />
        </label>
        <button aria-label="Zoom in" className="ml-[5px]">
          <svg viewBox="0 0 13 13" className="h-[13px] w-[13px]">
            <path d="M6.500 0v13M0 6.500h13" stroke="#6b6968" strokeWidth="2.400" />
          </svg>
        </button>
        <span className="ml-[15px]">80%</span>
      </div>
    </div>
  );
}

/* ---------- taskbar ---------- */

type TaskApp = { name: string; art: React.ReactNode; open?: boolean; active?: boolean; multi?: boolean };

const APPS: TaskApp[] = [
  {
    name: "Task view",
    art: (
      <path d="M7.500 6h17v19h-17zM5 9H3v13h2M27 9h2v13h-2" fill="none" stroke="#fff" strokeWidth="1.600" />
    ),
  },
  {
    name: "Edge",
    art: (
      <path
        d="M3 14C4 6 10 2 17 2c8 0 12 6 12 13v3H12c0 9 10 8 15 5v5C17 33 5 30 6 19c.500-5 3-7 7-9-4 0-8 1-10 4zm9 0h10c0-7-9-7-10 0z"
        fill="#3f7bd1"
      />
    ),
  },
  {
    name: "Store",
    art: (
      <>
        <path d="M10 7c1-8 7-8 9-1M13 7c1-9 8-8 9-1" fill="none" stroke="#fff" strokeWidth="1.500" />
        <path d="M1 7l30-2v28L1 30z" fill="#fff" />
        <path d="M4 13l6-.500V18H4zM11.500 12.500l8-.500v6h-8zM4 19.500h6v6l-6-.500zM11.500 19.500h8V26l-8-.500z" fill="#1e1f17" />
      </>
    ),
  },
  {
    name: "File Explorer",
    art: (
      <>
        <path d="M0 3h14l2 2h16v23H0z" fill="#fbe07a" />
        <path d="M0 3h14v3H0z" fill="#f0bd3a" />
        <path d="M5 16h22v12h-5v-6H11v6H5z" fill="#58c0ee" />
      </>
    ),
  },
  {
    name: "Firefox",
    open: true,
    art: (
      <>
        <circle cx="16" cy="16" r="15.500" fill="#e35a12" />
        <path d="M19 1c8 3 12 9 12.500 15-1 8-6 12-11.500 13 6-6 8-18-1-28z" fill="#f7b52b" />
        <path d="M9 3c8-5 16 0 18 8 1 7-4 11-8 11-6 0-8-4-6-7l4-2-5-3z" fill="#2d64b0" />
        <path d="M2 8l4 3 4-1 5 3-4 3c-1 7 7 8 12 5-3 7-16 8-20-1z" fill="#f2801f" />
      </>
    ),
  },
  {
    name: "Photo Gallery",
    open: true,
    art: (
      <>
        <path d="M0 2h16v28H0z" fill="#dfe9b8" />
        <path d="M10 14h20v15H10z" fill="#b9d98d" stroke="#fff" />
        <path d="M13 1h20v16H13z" fill="#a9d5f2" stroke="#fff" strokeWidth="1.500" />
        <path d="M15 4l2.500 4 5-1.500-.500 4.500 4 3-4.500 2 1.500 5.500-5-2-4 3.500-1.500-5-5.500.500 2.500-5-3-4 5-.500z" fill="#ea4d12" />
        <circle cx="16" cy="14" r="2.500" fill="#8a2408" />
        <path d="M0 20c0 9 8 13 20 11-8-1-14-5-16-12z" fill="#f1c131" />
      </>
    ),
  },
  {
    name: "Word",
    open: true,
    multi: true,
    art: (
      <>
        <path d="M16 4h15v24H16z" fill="#fff" stroke="#2f539f" />
        <path d="M19 8h9M19 12h9M19 16h9M19 20h9M19 24h9" stroke="#2f539f" strokeWidth="1.500" />
        <path d="M0 4l18-4v32L0 28z" fill="#2f539f" />
        <text x="9" y="21" textAnchor="middle" fontSize="14" fontWeight="700" fill="#fff">
          W
        </text>
      </>
    ),
  },
  {
    name: "Excel",
    open: true,
    active: true,
    art: (
      <>
        <path d="M16 4h15v24H16z" fill="#fff" stroke="#217346" />
        <path d="M19 8h10M19 12h10M19 16h10M19 20h10M19 24h10M24 6v20" stroke="#217346" strokeWidth="1.500" />
        <path d="M0 4l18-4v32L0 28z" fill="#217346" />
        <text x="9" y="21" textAnchor="middle" fontSize="15" fontWeight="700" fill="#fff">
          X
        </text>
      </>
    ),
  },
  {
    name: "FileZilla",
    art: (
      <>
        <rect x="0" y="0" width="32" height="32" fill="#b71a10" stroke="#b71a10" strokeWidth="2.500" strokeDasharray="2.500 1.500" />
        <path d="M8 5h13l-1 4h-9l-1 4h7l-1 4H9l-2 8H4zM15 14h11l-6 10h5l-1 4H13l1-4 6-7h-5z" fill="#fff" />
      </>
    ),
  },
  {
    name: "Snipping Tool",
    art: (
      <>
        <ellipse cx="12" cy="14" rx="11" ry="8" fill="#8f8d8c" />
        <ellipse cx="13" cy="9" rx="11" ry="8.500" fill="#f6f0f0" stroke="#c4342d" strokeWidth="1.500" />
        <path d="M7 6l14 14M18 2l-3 18" stroke="#8d9297" strokeWidth="2" />
        <ellipse cx="26" cy="22.500" rx="5" ry="3.500" fill="none" stroke="#2f7fc4" strokeWidth="2.200" />
        <ellipse cx="18.500" cy="27" rx="3" ry="5" fill="none" stroke="#2f7fc4" strokeWidth="2.200" />
      </>
    ),
  },
  {
    name: "Chrome",
    open: true,
    art: (
      <>
        <circle cx="16" cy="16" r="15.500" fill="#f7c92c" />
        <path d="M16 16L2.600 8.200A15.500 15.500 0 0 1 30 9.500H16z" fill="#dc3b2b" />
        <path d="M2.600 8.200A15.500 15.500 0 0 0 14.500 31.400l6.500-11-11 0z" fill="#35a24b" />
        <circle cx="16" cy="16" r="7.500" fill="#fff" />
        <circle cx="16" cy="16" r="5.800" fill="#4a7fd6" />
      </>
    ),
  },
];

const TRAY: { name: string; art: React.ReactNode }[] = [
  {
    name: "Power manager",
    art: (
      <>
        <rect x="0" y="0" width="22" height="22" rx="2" fill="#3f86cf" />
        <path d="M1 15h5v3h4v3H1z" fill="#c9b54a" />
        <path d="M8 6.500a5.500 5.500 0 1 0 6 0M11 3.500v8" fill="none" stroke="#fff" strokeWidth="1.800" />
      </>
    ),
  },
  {
    name: "Creative Cloud",
    art: (
      <>
        <path d="M6 17a5 5 0 0 1-1-10 7 7 0 0 1 12 0 5.500 5.500 0 0 1 0 10z" fill="#55554f" stroke="#a4a4a0" strokeWidth="1.200" />
        <path d="M6 14a3 3 0 1 1 3-4l4 4a3 3 0 1 0 1-5M9 9c2-3 6-3 7 0" fill="none" stroke="#c4c4c2" strokeWidth="1.400" />
      </>
    ),
  },
  {
    name: "Java",
    art: (
      <>
        <rect x="0" y="0" width="22" height="22" rx="1" fill="#ea6a0c" />
        <path d="M12 3c-5 4 2 5-1 9M14 6c-3 2 0 3-1 6M6 13.500h10M7 16h8M5 19h12" fill="none" stroke="#fff" strokeWidth="1.500" />
      </>
    ),
  },
  {
    name: "Antivirus",
    art: (
      <>
        <path d="M1 1h20v10c0 5-5 7-10 11C6 18 1 16 1 11z" fill="#e8e4e4" />
        <path d="M3 2.500h16v8c0 4-4 6-8 9-4-3-8-5-8-9z" fill="#a31c2c" />
        <path d="M6 13V5l5 4 5-4v8l-3-1V9l-2 2-2-2v3z" fill="#fff" />
      </>
    ),
  },
  {
    name: "Recorder",
    art: (
      <>
        <circle cx="11" cy="11" r="9" fill="none" stroke="#fff" strokeWidth="2" />
        <circle cx="11" cy="11" r="4" fill="#fff" />
      </>
    ),
  },
  {
    name: "Display",
    art: (
      <>
        <path d="M1 1h20v15H1z" fill="#8a8a88" />
        <path d="M2 17h7v4H0zM11 17h7l1 4h-8z" fill="#b8b8b6" />
      </>
    ),
  },
  { name: "OneDrive", art: <path d="M5 17a4 4 0 0 1-1-8 6 6 0 0 1 11-4 5 5 0 0 1 3 6 3.500 3.500 0 0 1 2 7H8z" fill="#a8a8a6" /> },
  {
    name: "Graphics",
    art: (
      <>
        <rect x="0" y="0" width="22" height="22" rx="3" fill="#3c8ddc" />
        <path d="M4 3h11v8H4z" fill="#8cc4f2" stroke="#fff" />
        <path d="M1 14l8 4v3H1z" fill="#d9bf3f" />
        <ellipse cx="14" cy="16" rx="5.500" ry="3.500" fill="none" stroke="#fff" strokeWidth="1.300" />
      </>
    ),
  },
  {
    name: "Audio manager",
    art: (
      <>
        <path d="M1 1c4-2 19 8 20 18l-8-2C6 14 0 7 1 1z" fill="#2b2b2b" stroke="#dcdcda" strokeWidth="1.500" />
        <circle cx="10" cy="9" r="2.500" fill="#d5d5d3" />
        <path d="M2 14h4l4 6-4 2z" fill="#b5b5b3" />
      </>
    ),
  },
  {
    name: "Bluetooth",
    art: (
      <>
        <rect x="3" y="0" width="16" height="22" rx="8" fill="#203a70" />
        <path d="M6 6.500l9 8-4 4v-15l4 4-9 8" fill="none" stroke="#fff" strokeWidth="1.600" />
      </>
    ),
  },
  {
    name: "Battery",
    art: (
      <>
        <path d="M5 6.500h14v8H5z" fill="#fff" />
        <path d="M5 4.500h15.500v12H3.500V8M21.500 8.500v4M1.500 2v3M4.500 2v3M.500 5h5v2.500h-5z" stroke="#fff" strokeWidth="1.200" fill="none" />
      </>
    ),
  },
  {
    name: "Wi-Fi",
    art: (
      <path d="M2 19C3 10 9 4 18 3M7 19c.500-6 5-11 11-12M11 19c.500-4 3-7 7-8M15 19c0-2 1-3 3-4" fill="none" stroke="#e8e8e6" strokeWidth="1.400" />
    ),
  },
  {
    name: "Volume",
    art: <path d="M1 7h4l4-4v16l-4-4H1zM13 7l8 8M21 7l-8 8" fill="none" stroke="#fff" strokeWidth="1.500" />,
  },
  {
    name: "Notifications",
    art: (
      <>
        <path d="M0 0h22v18h-8l-3 4-3-4H0z" fill="#fff" />
        <path d="M4 5h14M4 9h14M4 13h9" stroke="#1e1f17" strokeWidth="1.400" />
      </>
    ),
  },
];

function Taskbar() {
  return (
    <div className="flex h-[54px] items-stretch bg-[#1e1f17] text-white">
      <button aria-label="Start" className="flex w-[65px] items-center justify-center pl-[2px]">
        <svg viewBox="0 0 22 22" className="h-[22px] w-[22px]">
          <path d="M0 3l9.500-1.300v8.800H0zM10.500 1.500L22 0v10.500H10.500zM0 11.500h9.500v8.800L0 19zM10.500 11.500H22V22l-11.500-1.500z" fill="#fff" />
        </svg>
      </button>
      <input
        aria-label="Search the web and Windows"
        placeholder="Search the web and Windows"
        className="w-[465px] bg-[#2f2c2d] pl-[16px] text-[18px] outline-none placeholder:text-[#8f8d8c] placeholder:opacity-100"
      />
      <div className="flex">
        {APPS.map((a) => (
          <button
            key={a.name}
            aria-label={a.name}
            className={"flex w-[67px] flex-col items-center " + (a.active ? "bg-[#3f4537]" : "")}
          >
            <span className="flex h-[51px] items-center pt-[2px]">
              <svg viewBox="0 0 32 32" className="h-[30px] w-[30px] overflow-visible">
                {a.art}
              </svg>
            </span>
            {a.open && (
              <span className={"flex h-[3px] bg-[#cbe39b] " + (a.active ? "w-full" : "w-[54px]")}>
                {a.multi && <span className="ml-auto w-[11px] bg-[#93c47d]" />}
              </span>
            )}
          </button>
        ))}
      </div>
      <div className="ml-auto flex items-center">
        <ul className="flex w-[608px] items-center">
          {TRAY.map((t) => (
            <li key={t.name} className="flex flex-1 justify-center">
              <button aria-label={t.name}>
                <svg viewBox="0 0 22 22" className="h-[21px] w-[21px] overflow-visible">
                  {t.art}
                </svg>
              </button>
            </li>
          ))}
        </ul>
        <button aria-label="Touch keyboard" className="ml-[11px]">
          <svg viewBox="0 0 32 20" className="h-[20px] w-[32px]">
            <path d="M1 1h30v18H1z" fill="none" stroke="#fff" strokeWidth="1.500" />
            <path d="M4 5.500h24M4 9.500h24" stroke="#fff" strokeWidth="1.500" strokeDasharray="2 1.500" />
            <path d="M4 14h3M9 14h14M25 14h3" stroke="#fff" strokeWidth="1.500" />
          </svg>
        </button>
        <div className="mr-[11px] ml-[20px] pb-[3px] text-center text-[15px] leading-[23px]">
          <div>12:43 PM</div>
          <div>7/20/2016</div>
        </div>
        <div className="h-[54px] w-[7px] border-l border-[#6b6b65]" />
      </div>
    </div>
  );
}

/* ---------- page ---------- */

export default function App() {
  return (
    <main className="flex min-h-screen flex-col bg-white pt-[236px] text-black">
      <section
        aria-label="Excel window"
        className="mx-[236px] bg-[#2c774f] font-['Open_Sans','Noto_Sans',sans-serif]"
      >
        <TitleBar />
        <TabRow />
        <Ribbon />
        <FormulaBar />
        <Worksheet />
        <SheetTabs />
        <StatusBar />
        <Taskbar />
      </section>

      <p className="mx-[236px] mt-[46px] font-['Lato',sans-serif] text-[36px] leading-[48px] italic [font-variant-ligatures:none]">
        Figure 4.38 Selecting the Series Lines Option
      </p>

      <article className="mt-[75px] mr-[228px] ml-[236px] font-['Liberation_Serif',serif] text-[51px] leading-[64px]">
        <ol className="list-decimal pl-[70px]">
          <li className="pl-[22px]">
            Right click on any of the series lines added to the chart. Clicking one line will activate all lines
            <br />
            on the chart. (If the Format Pane is open, you will not need to right click.&nbsp; Just left click on any of
            the series lines to change the format pane to Format Series Lines)
          </li>
          <li className="pl-[22px]">
            Select <strong>Format Series Lines</strong>. This will open the <strong>Format Series Lines</strong> pane.
          </li>
          <li className="pl-[22px]">
            Change the width to <strong>2.25</strong>.
          </li>
          <li className="pl-[22px]">
            Close the <strong>Format Series Lines</strong> pane.
          </li>
        </ol>
        <p className="mt-[52px] pr-[8px] text-justify">
          <strong>Figure 4.39</strong> shows the appearance of the chart with the series lines connecting the two stacks.
          This formatting enhancement is common for stacked column charts. The lines help focus the audience’s attention
          to changes in the percent of total trend.
        </p>
      </article>

      <footer className="mt-auto pr-[149px] pb-[67px] text-right font-['Lato',sans-serif] text-[30px] leading-[44px] [font-variant-ligatures:none]">
        Data Analysis with Excel 235
      </footer>
    </main>
  );
}
